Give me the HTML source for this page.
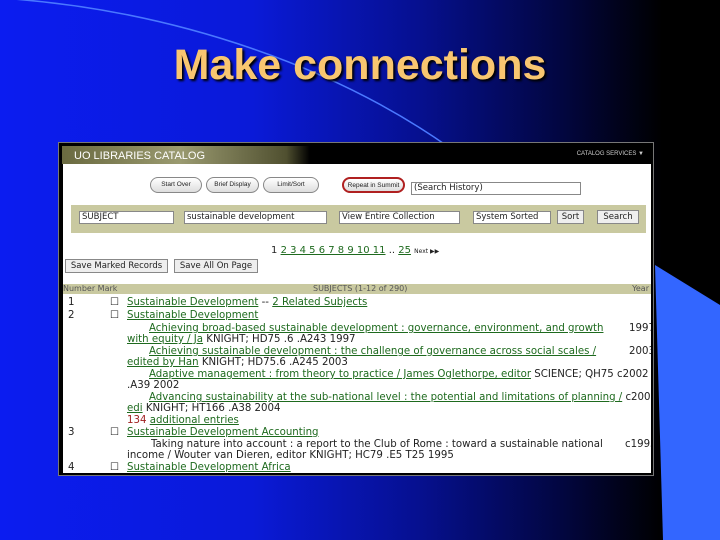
<!DOCTYPE html>
<html><head><style>
*{margin:0;padding:0;box-sizing:border-box}
body{width:720px;height:540px;overflow:hidden;position:relative;background:linear-gradient(90deg,#0b1cf0 0%,#0a1ad8 35%,#061090 58%,#020640 78%,#000 92%);font-family:"Liberation Sans",sans-serif}
.t{position:absolute;left:0;width:720px;top:41px;text-align:center;font-size:43px;font-weight:bold;color:#f8c670;text-shadow:2px 2px 2px #000}
.shot{position:absolute;left:58px;top:142px;width:596px;height:334px;background:#000;border:1px solid #777}
.in{position:absolute;left:4px;top:21px;width:588px;height:309px;background:#fff;overflow:hidden;font-family:"DejaVu Sans",sans-serif;font-size:10.2px;color:#222}
.hd{position:absolute;left:3px;top:3px;width:590px;height:18px;background:linear-gradient(90deg,#6a6a40 0%,#9a9a70 20%,#505030 38%,#000 42%)}
.hd span{position:absolute;left:12px;top:4px;color:#fff;font-size:11px}
.cs{position:absolute;right:8px;top:5px;color:#ccc;font-size:6px}
.a{position:absolute;white-space:nowrap}
.btn{position:absolute;top:13px;height:16px;border:1px solid #888;border-radius:8px;background:linear-gradient(#fff,#ddd);font-size:6.5px;text-align:center;line-height:14px;font-family:"Liberation Sans",sans-serif}
.sel{position:absolute;height:13px;border:1px solid #888;background:#fff;font-size:8.5px;line-height:11px;padding-left:2px}
.band{position:absolute;left:8px;top:41px;width:575px;height:28px;background:#c9c9a0}
.g{color:#1e6a1e;text-decoration:underline}
.th{position:absolute;left:0;top:120px;width:588px;height:10px;background:#c9c9a0;font-size:8px;color:#555}
.gb{position:absolute;height:14px;border:1px solid #888;background:#eee;font-size:8.5px;line-height:12px;text-align:center}
</style></head><body>
<svg width="720" height="540" style="position:absolute;left:0;top:0">
<path d="M0,-2 C180,10 340,70 450,148" stroke="#4a78ff" stroke-width="1.5" fill="none"/>
<polygon points="655,265 720,305 720,540 663,540" fill="#3366ff"/>
</svg>
<div class="t">Make connections</div>
<div class="shot">
<div class="hd"><span>UO LIBRARIES CATALOG</span><div class="cs">CATALOG SERVICES ▼</div></div>
<div class="in">
<div class="btn" style="left:87px;width:52px">Start Over</div>
<div class="btn" style="left:143px;width:53px">Brief Display</div>
<div class="btn" style="left:200px;width:56px">Limit/Sort</div>
<div class="btn" style="left:279px;width:63px;border:2px solid #b02020">Repeat in Summit</div>
<div class="sel" style="left:348px;top:18px;width:170px">(Search History)</div>
<div class="band"></div>
<div class="sel" style="left:16px;top:47px;width:95px">SUBJECT</div>
<div class="sel" style="left:121px;top:47px;width:143px">sustainable development</div>
<div class="sel" style="left:276px;top:47px;width:121px">View Entire Collection</div>
<div class="sel" style="left:410px;top:47px;width:78px">System Sorted</div>
<div class="gb" style="left:494px;top:46px;width:27px">Sort</div>
<div class="gb" style="left:534px;top:46px;width:42px">Search</div>
<div class="a" style="left:208px;top:81px;font-size:10px"><span>1</span> <span class="g">2 3 4 5 6 7 8 9 10 11</span> .. <span class="g">25</span> <span style="font-size:6px">Next ▶▶</span></div>
<div class="gb" style="left:2px;top:95px;width:103px">Save Marked Records</div>
<div class="gb" style="left:111px;top:95px;width:84px">Save All On Page</div>
<div class="th"><span class="a" style="left:0;top:0">Number Mark</span><span class="a" style="left:250px;top:0">SUBJECTS (1-12 of 290)</span><span class="a" style="right:2px;top:0">Year</span></div>
<div class="a" style="left:5px;top:133px">1</div><div class="a" style="left:47px;top:133px">☐</div><div class="a" style="left:64px;top:133px"><span class="g">Sustainable Development</span> -- <span class="g">2 Related Subjects</span></div>
<div class="a" style="left:5px;top:146px">2</div><div class="a" style="left:47px;top:146px">☐</div><div class="a" style="left:64px;top:146px"><span class="g">Sustainable Development</span></div>
<div class="a" style="left:86px;top:159px"><span class="g">Achieving broad-based sustainable development : governance, environment, and growth</span></div><div class="a" style="left:566px;top:159px">1997</div>
<div class="a" style="left:64px;top:170px"><span class="g">with equity / Ja</span> KNIGHT; HD75 .6 .A243 1997</div>
<div class="a" style="left:86px;top:182px"><span class="g">Achieving sustainable development : the challenge of governance across social scales /</span></div><div class="a" style="left:566px;top:182px">2003</div>
<div class="a" style="left:64px;top:193px"><span class="g">edited by Han</span> KNIGHT; HD75.6 .A245 2003</div>
<div class="a" style="left:86px;top:205px"><span class="g">Adaptive management : from theory to practice / James Oglethorpe, editor</span> SCIENCE; QH75 c2002</div>
<div class="a" style="left:64px;top:216px">.A39 2002</div>
<div class="a" style="left:86px;top:228px"><span class="g">Advancing sustainability at the sub-national level : the potential and limitations of planning /</span> c2004</div>
<div class="a" style="left:64px;top:239px"><span class="g">edi</span> KNIGHT; HT166 .A38 2004</div>
<div class="a" style="left:64px;top:251px"><span style="color:#a02020">134</span> <span class="g">additional entries</span></div>
<div class="a" style="left:5px;top:263px">3</div><div class="a" style="left:47px;top:263px">☐</div><div class="a" style="left:64px;top:263px"><span class="g">Sustainable Development Accounting</span></div>
<div class="a" style="left:88px;top:275px">Taking nature into account : a report to the Club of Rome : toward a sustainable national</div><div class="a" style="left:562px;top:275px">c1995</div>
<div class="a" style="left:64px;top:286px">income / Wouter van Dieren, editor KNIGHT; HC79 .E5 T25 1995</div>
<div class="a" style="left:5px;top:298px">4</div><div class="a" style="left:47px;top:298px">☐</div><div class="a" style="left:64px;top:298px"><span class="g">Sustainable Development Africa</span></div>
</div></div>
</body></html>
